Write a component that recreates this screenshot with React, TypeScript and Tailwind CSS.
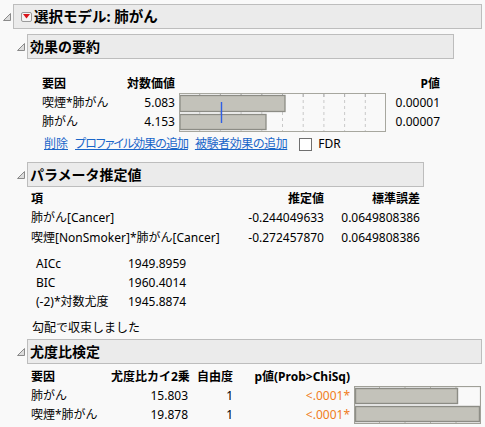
import React from 'react'

const FONT = "font-['Noto_Sans','Noto_Sans_CJK_JP',sans-serif]"

function Disclosure() {
  return (
    <svg width="8" height="8" viewBox="0 0 8 8" className="shrink-0">
      <path d="M7.5 0.5 L7.5 7.5 L0.5 7.5 Z" fill="#dcdcdc" stroke="#8a8a8a" strokeWidth="1" />
    </svg>
  )
}

function RedMenu() {
  return (
    <div className="w-[11px] h-[10px] rounded-[2px] border border-[#9a9a9a] bg-[#f4f4f4] flex items-center justify-center shrink-0">
      <svg width="7" height="5" viewBox="0 0 7 5">
        <path d="M0 0 L7 0 L3.5 4.5 Z" fill="#d9141b" />
      </svg>
    </div>
  )
}

function OutlineHeader({ title, width }: { title: string; width: string }) {
  return (
    <div className="flex items-center">
      <div className="w-[14px] flex items-center justify-start pl-[4px]"><Disclosure /></div>
      <div className={`${width} h-[25px] bg-[#ebebeb] border border-[#bdbdbd] flex items-center pl-[2px]`}>
        <span className="text-[14px] font-bold text-black leading-none">{title}</span>
      </div>
    </div>
  )
}

function SummaryChart() {
  const w = 207, h = 39
  const grid = Array.from({ length: 9 }, (_, i) => (i + 1) * (w / 10))
  return (
    <svg width={w} height={h} viewBox={`0 0 ${w} ${h}`} className="shrink-0">
      {grid.map(x => (
        <g key={x}>
          <line x1={x} y1={1} x2={x} y2={h - 1} stroke="#c9c9c9" strokeDasharray="3 3" />
          <line x1={x} y1={1} x2={x} y2={4} stroke="#b0b0b0" />
        </g>
      ))}
      <rect x={1} y={2.5} width={105} height={16} fill="#c3c2ba" stroke="#8c8c85" strokeWidth="1.3" />
      <rect x={1} y={21.5} width={86} height={15} fill="#c3c2ba" stroke="#8c8c85" strokeWidth="1.3" />
      <line x1={42.5} y1={9} x2={42.5} y2={30} stroke="#2f5fe6" strokeWidth="1.4" />
      <rect x={0.5} y={0.5} width={w - 1} height={h - 1} fill="none" stroke="#a7a79f" />
    </svg>
  )
}

function LRChart() {
  const w = 127, h = 38
  const ticks = [25.5, 51, 76.5, 102]
  return (
    <svg width={w} height={h} viewBox={`0 0 ${w} ${h}`} className="shrink-0">
      {ticks.map(x => (
        <g key={x}>
          <line x1={x} y1={1} x2={x} y2={4} stroke="#b8b8b0" />
          <line x1={x} y1={h - 4} x2={x} y2={h - 1} stroke="#b8b8b0" />
        </g>
      ))}
      <rect x={1.5} y={2.5} width={102} height={15} fill="#c3c2ba" stroke="#8c8c85" strokeWidth="1.4" />
      <rect x={1.5} y={20.5} width={124} height={15} fill="#c3c2ba" stroke="#8c8c85" strokeWidth="1.4" />
      <rect x={0.5} y={0.5} width={w - 1} height={h - 1} fill="none" stroke="#a0a098" strokeWidth="1.2" />
    </svg>
  )
}

export default function App() {
  return (
    <div className={`${FONT} w-[485px] h-[427px] overflow-hidden bg-[#f9f9f9] text-[12px] text-black whitespace-nowrap`}>
      <div className="pt-[4px]">
        <div className="flex items-center">
          <div className="w-[13px] flex items-center pl-[3px]"><Disclosure /></div>
          <div className="w-[469px] h-[25px] bg-[#ebebeb] border border-[#bdbdbd] flex items-center">
            <div className="ml-[7px] mr-[2px]"><RedMenu /></div>
            <span className="text-[14.5px] font-bold leading-none">選択モデル: 肺がん</span>
          </div>
        </div>

        <div className="pl-[13px]">
          {/* 効果の要約 */}
          <div className="mt-[5px]">
            <OutlineHeader title="効果の要約" width="w-[427px]" />
          </div>
          <div className="pl-[29px] mt-[15px]">
            <div className="flex h-[19px] items-center font-bold">
              <div className="w-[75px]">要因</div>
              <div className="w-[58px] text-right">対数価値</div>
              <div className="w-[211px]" />
              <div className="w-[54px] text-right">P値</div>
            </div>
            <div className="flex">
              <div className="flex flex-col">
                <div className="flex h-[19px] items-center">
                  <div className="w-[75px]">喫煙*肺がん</div>
                  <div className="w-[58px] text-right">5.083</div>
                </div>
                <div className="flex h-[19px] items-center">
                  <div className="w-[75px]">肺がん</div>
                  <div className="w-[58px] text-right">4.153</div>
                </div>
              </div>
              <div className="ml-[4px]"><SummaryChart /></div>
              <div className="flex flex-col">
                <div className="h-[19px] w-[54px] flex items-center justify-end">0.00001</div>
                <div className="h-[19px] w-[54px] flex items-center justify-end">0.00007</div>
              </div>
            </div>
            <div className="flex items-center h-[20px] mt-[2px] text-[#1a66c9] [font-feature-settings:'palt']">
              <span className="underline ml-[2px]">削除</span>
              <span className="underline ml-[7px] tracking-[-1px]">プロファイル効果の追加</span>
              <span className="underline ml-[7px] tracking-[-0.4px]">被験者効果の追加</span>
              <span className="w-[13px] h-[13px] bg-white border border-[#6f6f6f] ml-[12px]" />
              <span className="text-black ml-[6px]">FDR</span>
            </div>
          </div>

          {/* パラメータ推定値 */}
          <div className="mt-[8px]">
            <OutlineHeader title="パラメータ推定値" width="w-[397px]" />
          </div>
          <div className="pl-[18px] mt-[2px]">
            <div className="flex h-[19px] items-center font-bold">
              <div className="w-[200px]">項</div>
              <div className="w-[93px] text-right">推定値</div>
              <div className="w-[96px] text-right">標準誤差</div>
            </div>
            <div className="flex h-[20px] items-center">
              <div className="w-[200px]">肺がん[Cancer]</div>
              <div className="w-[93px] text-right">-0.244049633</div>
              <div className="w-[96px] text-right">0.0649808386</div>
            </div>
            <div className="flex h-[20px] items-center">
              <div className="w-[200px]">喫煙[NonSmoker]*肺がん[Cancer]</div>
              <div className="w-[93px] text-right">-0.272457870</div>
              <div className="w-[96px] text-right">0.0649808386</div>
            </div>
            <div className="pl-[5px] mt-[6px]">
              <div className="flex h-[19px] items-center"><div className="w-[92px]">AICc</div><div>1949.8959</div></div>
              <div className="flex h-[19px] items-center"><div className="w-[92px]">BIC</div><div>1960.4014</div></div>
              <div className="flex h-[19px] items-center"><div className="w-[92px]">(-2)*対数尤度</div><div>1945.8874</div></div>
            </div>
            <div className="flex h-[19px] items-center mt-[7px] pl-[1px]">勾配で収束しました</div>
          </div>

          {/* 尤度比検定 */}
          <div className="mt-[2px]">
            <OutlineHeader title="尤度比検定" width="w-[455px]" />
          </div>
          <div className="pl-[18px] mt-[3px]">
            <div className="flex h-[19px] items-center font-bold">
              <div className="w-[80px]">要因</div>
              <div className="w-[77px] text-right">尤度比カイ2乗</div>
              <div className="w-[45px] text-right">自由度</div>
              <div className="w-[117px] text-right">p値(Prob&gt;ChiSq)</div>
            </div>
            <div className="flex">
              <div className="flex flex-col">
                <div className="flex h-[19px] items-center">
                  <div className="w-[80px]">肺がん</div>
                  <div className="w-[77px] text-right">15.803</div>
                  <div className="w-[45px] text-right">1</div>
                  <div className="w-[117px] text-right text-[#f07c21]">&lt;.0001*</div>
                </div>
                <div className="flex h-[19px] items-center">
                  <div className="w-[80px]">喫煙*肺がん</div>
                  <div className="w-[77px] text-right">19.878</div>
                  <div className="w-[45px] text-right">1</div>
                  <div className="w-[117px] text-right text-[#f07c21]">&lt;.0001*</div>
                </div>
              </div>
              <div className="ml-[4px]"><LRChart /></div>
            </div>
          </div>
        </div>
      </div>
    </div>
  )
}
